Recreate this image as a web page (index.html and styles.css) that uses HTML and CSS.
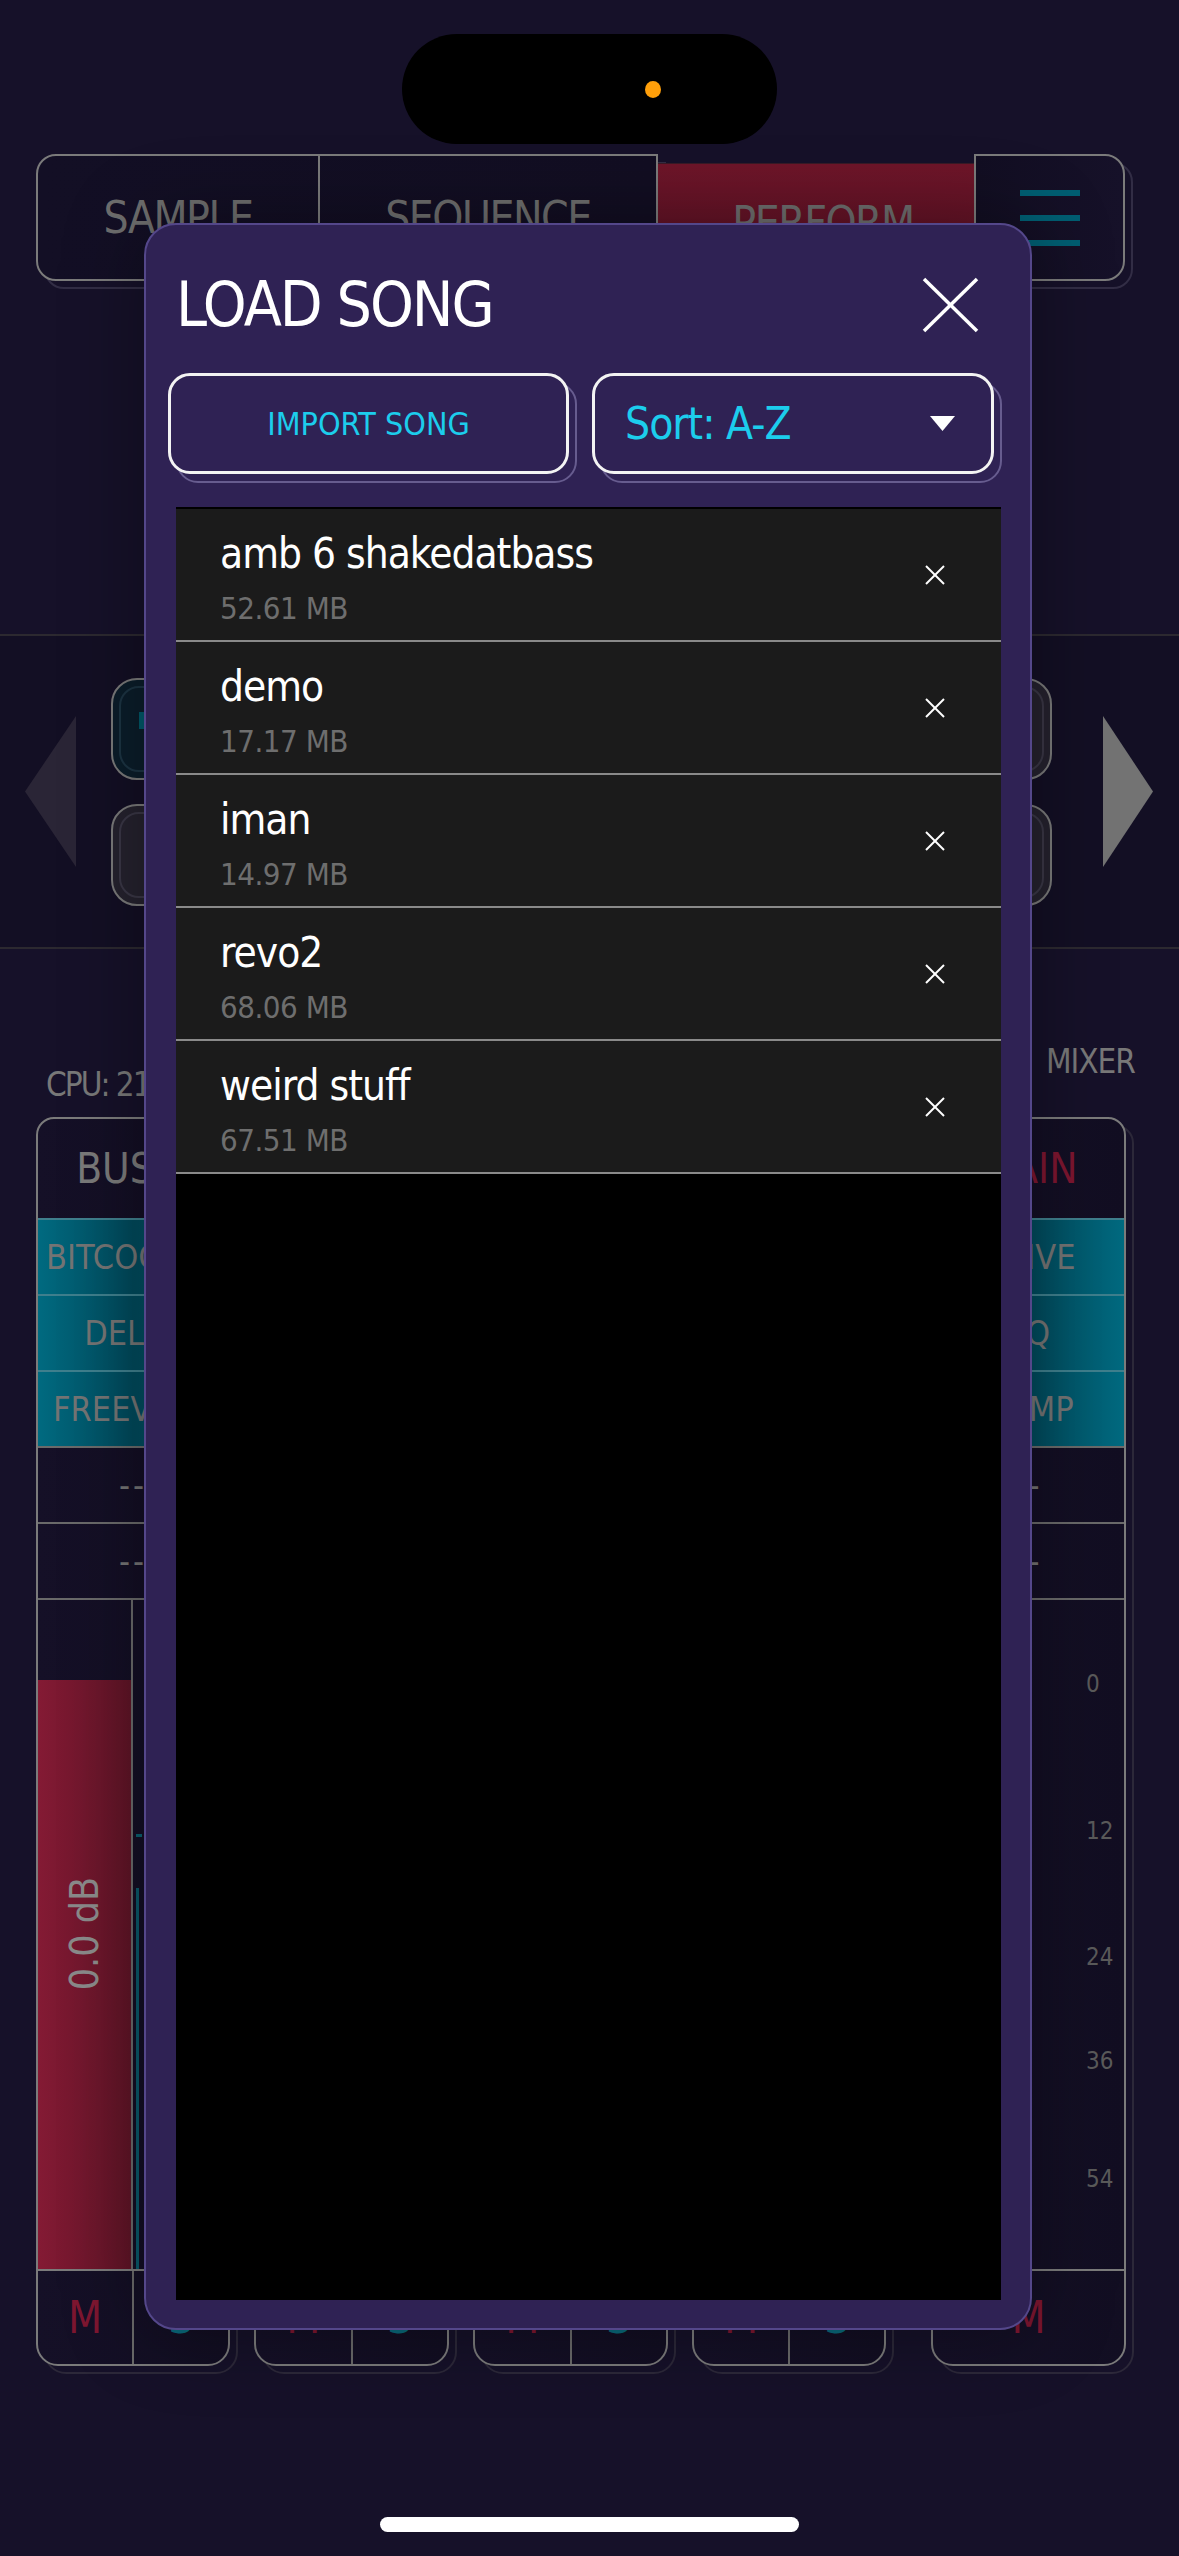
FILE: index.html
```html
<!DOCTYPE html>
<html lang="en">
<head>
<meta charset="utf-8">
<title>Load Song</title>
<link rel="stylesheet" href="styles.css">
</head>
<body>
<div class="screen">
  <div class="island"><span class="cam"></span></div>

  <nav class="tabs">
    <div class="tabgroup">
      <div class="tab tab-sample">SAMPLE</div>
      <div class="tab tab-seq">SEQUENCE</div>
    </div>
    <div class="tab tab-perform">PERFORM</div>
    <div class="menu-btn"><span></span><span></span><span></span></div>
  </nav>

  <section class="pads">
    <div class="arrow arrow-left"></div>
    <div class="pad-grid">
      <div class="pad pad-active"><span class="pad-mark"></span></div>
      <div class="pad"></div>
      <div class="pad"></div>
      <div class="pad"></div>
      <div class="pad"></div>
      <div class="pad"></div>
      <div class="pad"></div>
      <div class="pad"></div>
    </div>
    <div class="arrow arrow-right"></div>
  </section>

  <div class="mixer-head">
    <span class="cpu">CPU: 21%</span>
    <span class="mixer-label">MIXER</span>
  </div>

  <div class="mixer">
    <div class="strip strip-bus">
      <div class="strip-head">BUS 1</div>
      <div class="fx fx-on">BITCOOLER</div>
      <div class="fx fx-on">DELAY</div>
      <div class="fx fx-on">FREEVERB</div>
      <div class="fx">--</div>
      <div class="fx">--</div>
      <div class="fader">
        <div class="lvl-col"><div class="lvl-bar"><span class="db">0.0 dB</span></div></div>
        <div class="send-col"><span class="send-tick"></span><span class="send-line"></span></div>
      </div>
      <div class="ms"><div class="ms-btn mute">M</div><div class="ms-btn solo">S</div></div>
    </div>

    <div class="strip strip-ch">
      <div class="strip-head">CH 1</div>
      <div class="fx">--</div>
      <div class="fx">--</div>
      <div class="fx">--</div>
      <div class="fx">--</div>
      <div class="fx">--</div>
      <div class="fader"></div>
      <div class="ms"><div class="ms-btn mute">M</div><div class="ms-btn solo">S</div></div>
    </div>

    <div class="strip strip-ch">
      <div class="strip-head">CH 2</div>
      <div class="fx">--</div>
      <div class="fx">--</div>
      <div class="fx">--</div>
      <div class="fx">--</div>
      <div class="fx">--</div>
      <div class="fader"></div>
      <div class="ms"><div class="ms-btn mute">M</div><div class="ms-btn solo">S</div></div>
    </div>

    <div class="strip strip-ch">
      <div class="strip-head">CH 3</div>
      <div class="fx">--</div>
      <div class="fx">--</div>
      <div class="fx">--</div>
      <div class="fx">--</div>
      <div class="fx">--</div>
      <div class="fader"></div>
      <div class="ms"><div class="ms-btn mute">M</div><div class="ms-btn solo">S</div></div>
    </div>

    <div class="strip strip-main">
      <div class="strip-head head-main">MAIN</div>
      <div class="fx fx-on">DRIVE</div>
      <div class="fx fx-on">EQ</div>
      <div class="fx fx-on">COMP</div>
      <div class="fx">--</div>
      <div class="fx">--</div>
      <div class="fader fader-main">
        <span class="tick" style="top:69px">0</span>
        <span class="tick" style="top:216px">12</span>
        <span class="tick" style="top:342px">24</span>
        <span class="tick" style="top:446px">36</span>
        <span class="tick" style="top:564px">54</span>
      </div>
      <div class="ms"><div class="ms-btn mute">M</div></div>
    </div>
  </div>

  <div class="home-indicator"></div>

  <div class="modal">
    <div class="modal-head">
      <h1 class="modal-title">LOAD SONG</h1>
      <svg class="modal-close" viewBox="0 0 57 56" width="57" height="56">
        <line x1="2" y1="2" x2="55" y2="54" stroke="#fff" stroke-width="3.5"/>
        <line x1="55" y1="2" x2="2" y2="54" stroke="#fff" stroke-width="3.5"/>
      </svg>
    </div>
    <div class="modal-actions">
      <div class="btn btn-import">IMPORT SONG</div>
      <div class="btn btn-sort">
        <span>Sort: A-Z</span>
        <svg class="caret" viewBox="0 0 25 15" width="25" height="15"><polygon points="0,0 25,0 12.5,15" fill="#fff"/></svg>
      </div>
    </div>
    <div class="song-list">
      <div class="song">
        <div class="song-info"><div class="song-name">amb 6 shakedatbass</div><div class="song-size">52.61 MB</div></div>
        <svg class="song-del" viewBox="0 0 20 20" width="20" height="20"><line x1="1" y1="1" x2="19" y2="19" stroke="#fff" stroke-width="2"/><line x1="19" y1="1" x2="1" y2="19" stroke="#fff" stroke-width="2"/></svg>
      </div>
      <div class="song">
        <div class="song-info"><div class="song-name">demo</div><div class="song-size">17.17 MB</div></div>
        <svg class="song-del" viewBox="0 0 20 20" width="20" height="20"><line x1="1" y1="1" x2="19" y2="19" stroke="#fff" stroke-width="2"/><line x1="19" y1="1" x2="1" y2="19" stroke="#fff" stroke-width="2"/></svg>
      </div>
      <div class="song">
        <div class="song-info"><div class="song-name">iman</div><div class="song-size">14.97 MB</div></div>
        <svg class="song-del" viewBox="0 0 20 20" width="20" height="20"><line x1="1" y1="1" x2="19" y2="19" stroke="#fff" stroke-width="2"/><line x1="19" y1="1" x2="1" y2="19" stroke="#fff" stroke-width="2"/></svg>
      </div>
      <div class="song">
        <div class="song-info"><div class="song-name">revo2</div><div class="song-size">68.06 MB</div></div>
        <svg class="song-del" viewBox="0 0 20 20" width="20" height="20"><line x1="1" y1="1" x2="19" y2="19" stroke="#fff" stroke-width="2"/><line x1="19" y1="1" x2="1" y2="19" stroke="#fff" stroke-width="2"/></svg>
      </div>
      <div class="song">
        <div class="song-info"><div class="song-name">weird stuff</div><div class="song-size">67.51 MB</div></div>
        <svg class="song-del" viewBox="0 0 20 20" width="20" height="20"><line x1="1" y1="1" x2="19" y2="19" stroke="#fff" stroke-width="2"/><line x1="19" y1="1" x2="1" y2="19" stroke="#fff" stroke-width="2"/></svg>
      </div>
    </div>
  </div>
</div>
</body>
</html>
```
FILE: styles.css
```css
* { box-sizing: border-box; margin: 0; padding: 0; }

html, body {
  width: 1179px;
  height: 2556px;
  overflow: hidden;
  background: #161129;
}

body {
  font-family: "DejaVu Sans Condensed", "Liberation Sans Narrow", "Liberation Sans", sans-serif;
}

.screen {
  position: relative;
  z-index: 0;
  width: 1179px;
  height: 2556px;
  padding-top: 34px;
  background: #161129;
  overflow: hidden;
}

/* dynamic island */
.island {
  width: 375px;
  height: 110px;
  margin: 0 auto;
  background: #000;
  border-radius: 55px;
  display: flex;
  align-items: center;
  justify-content: flex-end;
  padding-right: 116px;
}
.cam {
  width: 16px;
  height: 17px;
  border-radius: 50%;
  background: #ff9f0a;
}

/* top tabs */
.tabs {
  display: flex;
  margin: 10px 0 0 36px;
  width: 1089px;
  height: 127px;
}
.tabgroup {
  position: relative;
  display: flex;
  width: 622px;
  height: 127px;
  border: 2px solid #7b7b7b;
  border-radius: 20px 0 0 20px;
  background: linear-gradient(90deg, #130f25, #120e22);
}
.tabgroup::after {
  content: "";
  position: absolute;
  left: 6px;
  top: 6px;
  right: -10px;
  bottom: -10px;
  border: 2px solid #322d45;
  border-radius: 20px 0 0 20px;
  z-index: -1;
}
.tab {
  display: flex;
  align-items: center;
  justify-content: center;
  color: #6e6e6e;
  font-size: 44px;
  letter-spacing: -1.5px;
}
.tab-sample {
  width: 282px;
  border-right: 2px solid #7b7b7b;
}
.tab-seq { flex: 1; }
.tab-perform {
  width: 316px;
  height: 118px;
  margin-top: 9px;
  padding-left: 14px;
  border-top: 1px solid #3a1a26;
  background: linear-gradient(180deg, #6e1529, #5a1124);
}
.menu-btn {
  position: relative;
  width: 151px;
  height: 127px;
  border: 2px solid #7b7b7b;
  border-radius: 0 20px 20px 0;
  background: linear-gradient(90deg, #120e22, #161129);
  display: flex;
  flex-direction: column;
  align-items: center;
  justify-content: center;
  gap: 19px;
}
.menu-btn::after {
  content: "";
  position: absolute;
  left: 6px;
  top: 6px;
  right: -10px;
  bottom: -10px;
  border: 2px solid #322d45;
  border-radius: 0 20px 20px 0;
  z-index: -1;
}
.menu-btn span {
  width: 60px;
  height: 6px;
  background: #005e72;
}

/* pads band */
.pads {
  margin-top: 353px;
  height: 315px;
  border-top: 2px solid #2c2930;
  border-bottom: 2px solid #2c2930;
  background: #130f24;
  display: flex;
  align-items: center;
  padding-left: 25px;
}
.arrow {
  width: 51px;
  height: 151px;
  flex: none;
}
.arrow-left {
  background: #2a2536;
  clip-path: polygon(0 50%, 100% 0, 100% 100%);
}
.arrow-right {
  width: 50px;
  margin-left: 51px;
  background: #737373;
  clip-path: polygon(0 0, 100% 50%, 0 100%);
}
.pad-grid {
  margin-left: 35px;
  width: 941px;
  display: grid;
  grid-template-columns: repeat(4, 1fr);
  gap: 24px;
}
.pad {
  position: relative;
  height: 102px;
  border: 2px solid #7a7a7a;
  border-radius: 26px;
  background: #25222e;
}
.pad::before {
  content: "";
  position: absolute;
  inset: 6px;
  border: 2px solid #3a3746;
  border-radius: 20px;
}
.pad::after {
  content: "";
  position: absolute;
  left: 6px;
  top: 6px;
  right: -10px;
  bottom: -10px;
  border: 2px solid #2c2838;
  border-radius: 26px;
  z-index: -1;
}
.pad-active { background: #0b1d2a; }
.pad-active::before { border-color: #1c3443; }
.pad-mark {
  position: absolute;
  left: 26px;
  top: 32px;
  width: 8px;
  height: 17px;
  background: #005a6a;
}

/* mixer header */
.mixer-head {
  height: 168px;
  display: flex;
  justify-content: space-between;
  align-items: flex-start;
  padding: 0 44px 0 46px;
  color: #787878;
  line-height: 36px;
}
.cpu {
  margin-top: 118px;
  font-size: 33px;
  letter-spacing: -2px;
}
.mixer-label {
  margin-top: 95px;
  font-size: 33px;
  letter-spacing: -1px;
}

/* mixer strips */
.mixer {
  display: flex;
  padding-left: 36px;
  height: 1249px;
}
.strip {
  position: relative;
  width: 195px;
  height: 1249px;
  margin-right: 24px;
  border: 2px solid #7b7b7b;
  border-radius: 18px 18px 22px 22px;
  background: linear-gradient(90deg, #151027, #120e22);
  display: flex;
  flex-direction: column;
}
.strip::after {
  content: "";
  position: absolute;
  left: 6px;
  top: 6px;
  right: -10px;
  bottom: -10px;
  border: 2px solid #2c2839;
  border-radius: 18px 18px 22px 22px;
  z-index: -1;
}
.strip-bus { width: 194px; }
.strip-ch:nth-child(4) { width: 194px; margin-right: 45px; }
.strip-main { margin-right: 0; }

.strip-head {
  height: 99px;
  display: flex;
  align-items: center;
  justify-content: center;
  color: #7a7a7a;
  font-size: 42px;
}
.head-main { color: #7d1630; }
.fx {
  height: 76px;
  border-top: 2px solid #6a6a6a;
  display: flex;
  align-items: center;
  justify-content: center;
  color: #747474;
  font-size: 34px;
  letter-spacing: 3px;
}
.fx-on {
  letter-spacing: 0;
  background: linear-gradient(90deg, #006a80, #00495b 50%, #006a80);
  border-top-color: #3f7f8d;
}

.fader {
  position: relative;
  height: 671px;
  border-top: 2px solid #6a6a6a;
  display: flex;
}
.lvl-col {
  width: 95px;
  border-right: 2px solid #6a6a6a;
  display: flex;
  flex-direction: column;
}
.lvl-bar {
  flex: 1;
  margin-top: 80px;
  background: linear-gradient(90deg, #841a34, #5e1426);
  display: flex;
  align-items: center;
  justify-content: center;
  padding-bottom: 82px;
}
.db {
  writing-mode: vertical-rl;
  transform: rotate(180deg);
  color: #8a8a8a;
  font-size: 39px;
  line-height: 44px;
}
.send-col {
  display: flex;
  flex-direction: column;
  padding-left: 3px;
}
.send-tick {
  width: 6px;
  height: 3px;
  margin-top: 234px;
  background: #0a6070;
}
.send-line {
  width: 3px;
  flex: 1;
  margin-top: 51px;
  background: #0a5a6a;
}

.fader-main { display: block; }
.tick {
  position: absolute;
  left: 153px;
  font-size: 24px;
  line-height: 30px;
  color: #5a5a5a;
}

.ms {
  height: 95px;
  border-top: 2px solid #7b7b7b;
  display: flex;
}
.ms-btn {
  flex: 1;
  display: flex;
  align-items: center;
  justify-content: center;
  font-size: 44px;
}
.ms-btn + .ms-btn { border-left: 2px solid #6a6a6a; }
.mute { color: #7d1630; }
.solo { color: #0a6a7c; }

.home-indicator {
  width: 419px;
  height: 15px;
  margin: 151px auto 0;
  border-radius: 8px;
  background: #fff;
}

/* modal */
.modal {
  position: absolute;
  left: 144px;
  top: 223px;
  width: 888px;
  height: 2107px;
  z-index: 10;
  border: 2px solid #54478a;
  border-radius: 32px;
  background: #2f2254;
  box-shadow: 0 0 80px rgba(0, 0, 0, 0.35);
  display: flex;
  flex-direction: column;
}
.modal-head {
  height: 148px;
  display: flex;
  justify-content: space-between;
  align-items: flex-start;
  padding: 0 51px 0 30px;
}
.modal-title {
  margin-top: 45px;
  color: #fff;
  font-size: 62px;
  line-height: 70px;
  letter-spacing: -2px;
  font-weight: normal;
}
.modal-close { margin-top: 52px; }

.modal-actions {
  display: flex;
  gap: 23px;
  padding-left: 22px;
  height: 101px;
}
.btn {
  position: relative;
  height: 101px;
  border: 3px solid #f3f3f3;
  border-radius: 22px;
  background: #2f2254;
  color: #1ccdec;
  display: flex;
  align-items: center;
}
.btn::after {
  content: "";
  position: absolute;
  left: 5px;
  top: 6px;
  right: -11px;
  bottom: -12px;
  border: 2px solid #675c8f;
  border-radius: 22px;
  z-index: -1;
}
.btn-import {
  width: 401px;
  justify-content: center;
  font-size: 32px;
}
.btn-sort {
  width: 402px;
  justify-content: space-between;
  padding: 0 36px 0 30px;
  font-size: 44px;
  letter-spacing: -1px;
}

.song-list {
  flex: 1;
  margin: 33px 29px 28px 30px;
  padding-top: 2px;
  background: #000;
}
.song {
  height: 133px;
  border-bottom: 2px solid #8a8a8a;
  background: #1b1b1b;
  display: flex;
  align-items: center;
  justify-content: space-between;
  padding: 0 56px 0 44px;
}
.song-info {
  margin-top: 5px;
  display: flex;
  flex-direction: column;
  gap: 6px;
}
.song-name {
  color: #fff;
  font-size: 42px;
  line-height: 56px;
  letter-spacing: -1px;
}
.song-size {
  color: #6e6e6e;
  font-size: 31px;
  line-height: 40px;
  letter-spacing: -0.5px;
}
```
